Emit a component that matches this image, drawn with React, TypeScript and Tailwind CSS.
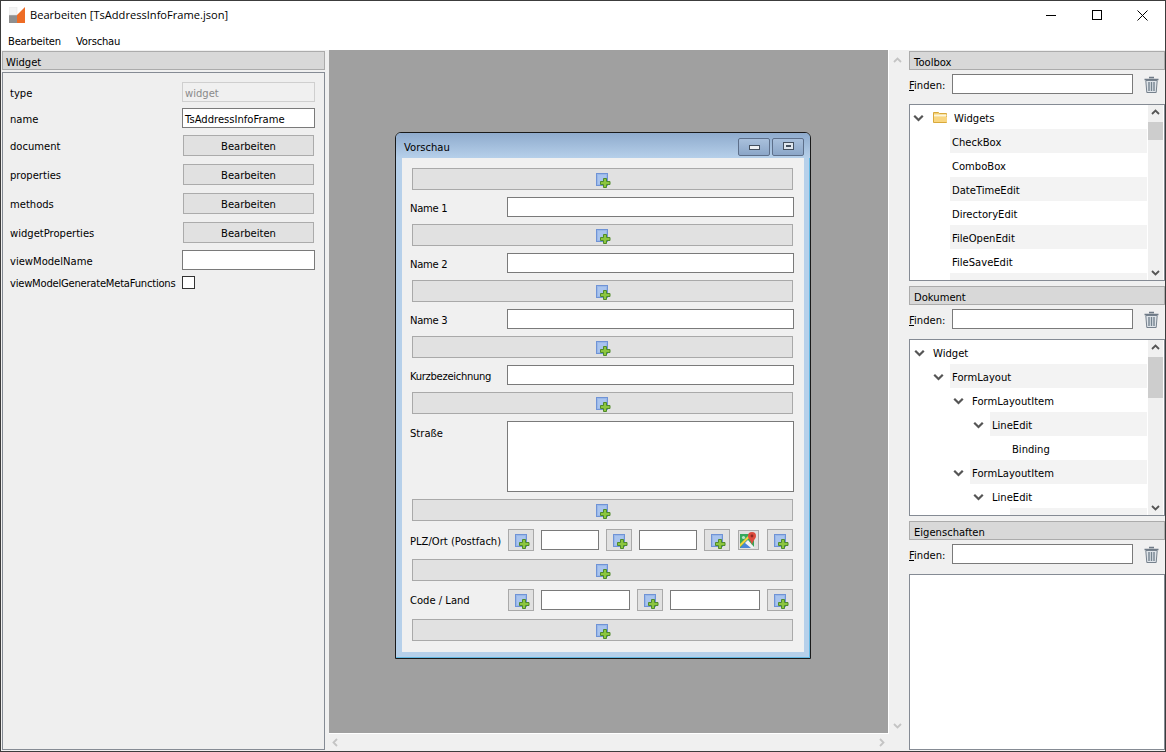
import React from "react";

const inputCls = "block h-[20px] border border-[#7a7a7a] bg-white";

function AddIcon({ className = "" }: { className?: string }) {
  return (
    <svg width="15" height="15" viewBox="0 0 15 15" className={className}>
      <rect x="0.5" y="0.5" width="11" height="12" fill="#9ab8e8" stroke="#6f93d6" />
      <rect x="2" y="2" width="8" height="9" fill="#a9c4ee" />
      <path d="M7.5 5.5h3v3h3.5v3h-3.5v3h-3v-3H4.5v-3h3z" fill="#8cc63f" stroke="#4f8a2a" />
    </svg>
  );
}

function AddBar() {
  return (
    <div className="ml-[10px] flex h-[22px] w-[381px] shrink-0 items-center justify-center border border-[#a9a9a9] bg-[#e1e1e1] pl-[2px] pt-[2px]">
      <AddIcon />
    </div>
  );
}

function AddButton() {
  return (
    <div className="flex h-[22px] w-[26px] shrink-0 items-center justify-center border border-[#a9a9a9] bg-[#e1e1e1] pl-[2px] pt-[2px]">
      <AddIcon />
    </div>
  );
}

function MapIcon() {
  return (
    <div className="flex h-[20px] w-[21px] shrink-0 items-center justify-center border border-[#a9a9a9] bg-[#e1e1e1]">
      <svg width="17" height="17" viewBox="0 0 17 17">
        <rect x="0" y="2" width="14" height="14" fill="#35a85a" />
        <path d="M0 16 L7 8 L14 16Z" fill="#4a86d8" />
        <path d="M0 12 L10 2 H13 L0 15Z" fill="#f4d23c" />
        <path d="M5 11 L8 8 L14 15 V16 H11Z" fill="#f3f3f3" />
        <circle cx="3.5" cy="5.5" r="1.6" fill="#bfe3c8" />
        <path d="M12 0a4 4 0 0 1 4 4c0 3-3 4-4 9-1-5-4-6-4-9a4 4 0 0 1 4-4z" fill="#dd4b3e" />
        <circle cx="12" cy="4" r="1.4" fill="#8e2a22" />
      </svg>
    </div>
  );
}

function FormRow({ label, children }: { label: string; children: React.ReactNode }) {
  return (
    <div className="mt-[7px] flex shrink-0 items-center">
      <div className="w-[105px] shrink-0 pl-[8px] pt-[4px] tracking-[-0.3px]">{label}</div>
      {children}
    </div>
  );
}

function Chevron({ dir = "down", color = "#555", size = 9 }: { dir?: "down" | "up" | "left" | "right"; color?: string; size?: number }) {
  const d = {
    down: "M1 3l3.5 3.5L8 3",
    up: "M1 6l3.5-3.5L8 6",
    left: "M6 1L2.5 4.5 6 8",
    right: "M3 1l3.5 3.5L3 8",
  }[dir];
  return (
    <svg width={size} height={size} viewBox="0 0 9 9" className="shrink-0">
      <path d={d} fill="none" stroke={color} strokeWidth="1.8" />
    </svg>
  );
}

function Trash() {
  return (
    <svg width="15" height="17" viewBox="0 0 15 17" className="shrink-0">
      <path d="M5 1.5h5M0.5 3.5h14" stroke="#6f7a86" strokeWidth="1.4" fill="none" />
      <path d="M1.8 4.5h11.4l-1 12H2.8z" fill="#dfe4e9" stroke="#76818d" />
      <path d="M5 6v9M7.5 6v9M10 6v9" stroke="#74838f" strokeWidth="1.4" />
    </svg>
  );
}

function Folder() {
  return (
    <svg width="15" height="12" viewBox="0 0 15 12" className="shrink-0">
      <path d="M0.5 1.5h5l1 1h7v9h-13z" fill="#f4cf72" stroke="#d9a93a" />
      <path d="M1 3.5h12.5v2H1z" fill="#fdf6dc" />
      <path d="M1 6h13v5H1z" fill="#f9d680" />
    </svg>
  );
}

function PanelHeader({ title, pl = "pl-[4px]" }: { title: string; pl?: string }) {
  return (
    <div className={`flex h-[19px] shrink-0 items-center border border-[#ababab] bg-[#d8d8d8] pt-[4px] ${pl}`}>{title}</div>
  );
}

function FindRow() {
  return (
    <div className="mb-[10px] mt-[4px] flex h-[20px] shrink-0 items-center">
      <div className="w-[43px] shrink-0 pt-[4px]">
        <span className="underline">F</span>inden:
      </div>
      <div className={`${inputCls} w-[181px] shrink-0`} />
      <div className="ml-[11px]">
        <Trash />
      </div>
    </div>
  );
}

type TreeItem = { text: string; indent: number; alt?: boolean; arrow?: boolean };

function TreeRow({ text, indent, alt, arrow }: TreeItem) {
  return (
    <div className="flex h-[24px] w-[237px] shrink-0 items-center">
      <div className="flex shrink-0 items-center justify-end pr-[2px]" style={{ width: indent }}>
        {arrow && (
          <span className="mr-[4px]">
            <Chevron dir="down" size={11} />
          </span>
        )}
      </div>
      <div className={`flex h-[24px] flex-1 items-center pl-[2px] pt-[4px] ${alt ? "bg-[#f3f3f3]" : ""}`}>{text}</div>
    </div>
  );
}

function ScrollBar({ thumbTop, thumbH }: { thumbTop: number; thumbH: number }) {
  return (
    <div className="relative mr-[1px] flex w-[15px] shrink-0 flex-col items-center justify-between bg-[#f0f0f0] py-[3px]">
      <Chevron dir="up" />
      <div className="absolute left-0 w-[15px] bg-[#cdcdcd]" style={{ top: thumbTop, height: thumbH }} />
      <Chevron dir="down" />
    </div>
  );
}

function ToolboxTree() {
  const items = ["CheckBox", "ComboBox", "DateTimeEdit", "DirectoryEdit", "FileOpenEdit", "FileSaveEdit"];
  return (
    <div className="flex h-[177px] shrink-0 border border-[#858b94] bg-white">
      <div className="w-[238px] shrink-0 overflow-hidden">
        <div className="flex h-[24px] items-center">
          <span className="ml-[3px]">
            <Chevron size={11} />
          </span>
          <span className="ml-[9px]">
            <Folder />
          </span>
          <span className="ml-[6px] pt-[4px]">Widgets</span>
        </div>
        {items.map((t, i) => (
          <TreeRow key={t} text={t} indent={40} alt={i % 2 === 0} />
        ))}
        <TreeRow text="" indent={40} alt />
      </div>
      <ScrollBar thumbTop={17} thumbH={18} />
    </div>
  );
}

function DokumentTree() {
  const rows: TreeItem[] = [
    { text: "Widget", indent: 21, arrow: true },
    { text: "FormLayout", indent: 40, alt: true, arrow: true },
    { text: "FormLayoutItem", indent: 60, arrow: true },
    { text: "LineEdit", indent: 80, alt: true, arrow: true },
    { text: "Binding", indent: 100 },
    { text: "FormLayoutItem", indent: 60, alt: true, arrow: true },
    { text: "LineEdit", indent: 80, arrow: true },
    { text: "", indent: 100, alt: true },
  ];
  return (
    <div className="flex h-[177px] shrink-0 border border-[#858b94] bg-white">
      <div className="w-[238px] shrink-0 overflow-hidden">
        {rows.map((r, i) => (
          <TreeRow key={i} {...r} />
        ))}
      </div>
      <ScrollBar thumbTop={17} thumbH={41} />
    </div>
  );
}

function LeftRow({ label, children, h, mt, pt = "pt-[2px]", tracking = "" }: { label: string; children: React.ReactNode; h: string; mt: string; pt?: string; tracking?: string }) {
  return (
    <div className={`flex items-center ${h} ${mt}`}>
      <div className={`w-[179px] shrink-0 whitespace-nowrap pl-[7px] ${pt} ${tracking}`}>{label}</div>
      {children}
    </div>
  );
}

function EditButton() {
  return (
    <div className="ml-[1px] flex h-[21px] w-[131px] items-center justify-center border border-[#ababab] bg-[#e1e1e1] pt-[2px]">
      Bearbeiten
    </div>
  );
}

function PreviewWindow() {
  return (
    <div className="flex h-[527px] w-[416px] flex-col rounded-t-[6px] border border-[#1a1a1a] bg-[#b6d0ea] shadow-[inset_-1px_-1px_0_#62b8e2]">
      <div className="flex h-[25px] shrink-0 items-center justify-between rounded-t-[5px] bg-gradient-to-b from-[#8fabcd] to-[#b6d0ea] pl-[8px] pr-[6px]">
        <span className="pt-[4px] text-black">Vorschau</span>
        <div className="flex gap-[2px] pt-[2px]">
          <div className="flex h-[18px] w-[32px] items-center justify-center rounded-[2px] border border-[#5d6f8a] bg-gradient-to-b from-[#a9c0dc] to-[#8ba6c8]">
            <div className="mt-[2px] h-[5px] w-[11px] border border-[#44505f] bg-[#eef1f4]" />
          </div>
          <div className="flex h-[18px] w-[32px] items-center justify-center rounded-[2px] border border-[#5d6f8a] bg-gradient-to-b from-[#a9c0dc] to-[#8ba6c8]">
            <div className="mb-[1px] flex h-[8px] w-[11px] items-center justify-center border border-[#44505f] bg-[#dfe6ee]">
              <div className="h-[2px] w-[5px] bg-[#44505f]" />
            </div>
          </div>
        </div>
      </div>
      <div className="mx-[6px] flex h-[494px] flex-col bg-[#f0f0f0] pt-[10px]">
        <AddBar />
        <FormRow label="Name 1">
          <div className={`${inputCls} w-[287px]`} />
        </FormRow>
        <div className="h-[7px] shrink-0" />
        <AddBar />
        <FormRow label="Name 2">
          <div className={`${inputCls} w-[287px]`} />
        </FormRow>
        <div className="h-[7px] shrink-0" />
        <AddBar />
        <FormRow label="Name 3">
          <div className={`${inputCls} w-[287px]`} />
        </FormRow>
        <div className="h-[7px] shrink-0" />
        <AddBar />
        <FormRow label="Kurzbezeichnung">
          <div className={`${inputCls} w-[287px]`} />
        </FormRow>
        <div className="h-[7px] shrink-0" />
        <AddBar />
        <div className="mt-[7px] flex shrink-0 items-start">
          <div className="w-[105px] shrink-0 pl-[8px] pt-[8px]">Straße</div>
          <div className="h-[71px] w-[287px] border border-[#7a7a7a] bg-white" />
        </div>
        <div className="h-[7px] shrink-0" />
        <AddBar />
        <div className="mt-[8px] flex h-[22px] shrink-0 items-center">
          <div className="w-[106px] shrink-0 whitespace-nowrap pl-[8px] pt-[4px]">PLZ/Ort (Postfach)</div>
          <AddButton />
          <div className={`${inputCls} ml-[7px] w-[58px]`} />
          <div className="ml-[7px]">
            <AddButton />
          </div>
          <div className={`${inputCls} ml-[7px] w-[58px]`} />
          <div className="ml-[7px]">
            <AddButton />
          </div>
          <div className="ml-[8px]">
            <MapIcon />
          </div>
          <div className="ml-[8px]">
            <AddButton />
          </div>
        </div>
        <div className="h-[8px] shrink-0" />
        <AddBar />
        <div className="mt-[8px] flex h-[22px] shrink-0 items-center">
          <div className="w-[106px] shrink-0 pl-[8px] pt-[2px]">Code / Land</div>
          <AddButton />
          <div className={`${inputCls} ml-[7px] w-[89px]`} />
          <div className="ml-[7px]">
            <AddButton />
          </div>
          <div className={`${inputCls} ml-[7px] w-[90px]`} />
          <div className="ml-[7px]">
            <AddButton />
          </div>
        </div>
        <div className="h-[8px] shrink-0" />
        <AddBar />
      </div>
    </div>
  );
}

export default function App() {
  return (
    <div className="flex h-[752px] w-[1166px] flex-col overflow-hidden border border-[#3c3c3c] bg-white font-['DejaVu_Sans',sans-serif] text-[10px] leading-none text-black">
      {/* title bar */}
      <div className="flex h-[30px] shrink-0 items-center pb-[2px]">
        <svg width="18" height="17" viewBox="0 0 18 17" className="ml-[8px] shrink-0">
          <path d="M0 8h8v8H0z" fill="#8f8f8f" />
          <path d="M0 0h8v8H0z" fill="#f4f4f4" stroke="#e2e2e2" strokeWidth="0.5" />
          <path d="M8 16V8l8-8v16z" fill="#ee6c25" />
        </svg>
        <span className="ml-[3px] font-['Open_Sans',sans-serif] text-[11.1px]">Bearbeiten [TsAddressInfoFrame.json]</span>
        <div className="ml-auto flex text-[#111]">
          <div className="flex w-[46px] items-center justify-center pr-[1px]">
            <div className="h-px w-[10px] bg-black" />
          </div>
          <div className="flex w-[45px] items-center justify-center">
            <div className="h-[10px] w-[10px] border border-black" />
          </div>
          <div className="flex w-[46px] items-center justify-center">
            <svg width="11" height="11" viewBox="0 0 11 11">
              <path d="M0.5 0.5l10 10M10.5 0.5l-10 10" stroke="#000" fill="none" />
            </svg>
          </div>
        </div>
      </div>
      {/* menu */}
      <div className="flex h-[19px] shrink-0 items-center gap-[15px] pl-[7px] pt-[2px]">
        <span className="tracking-[-0.2px]">Bearbeiten</span>
        <span className="tracking-[-0.2px]">Vorschau</span>
      </div>
      <div className="flex min-h-0 flex-1 bg-[#f0f0f0]">
        {/* left panel */}
        <div className="flex w-[328px] shrink-0 flex-col pb-[1px] pl-[1px] pr-[4px] pt-[1px]">
          <PanelHeader title="Widget" pl="pl-[3px]" />
          <div className="mt-[2px] flex-1 border border-[#858b94] bg-[#efefef] pt-[9px]">
            <LeftRow label="type" h="h-[20px]" mt="" pt="pt-[4px]">
              <div className="flex h-[20px] w-[133px] items-center border border-[#cfcfcf] bg-[#f0f0f0] pl-[2px] pt-[4px] text-[#8a8a8a]">widget</div>
            </LeftRow>
            <LeftRow label="name" h="h-[20px]" mt="mt-[6px]" pt="pt-[4px]">
              <div className={`${inputCls} flex w-[133px] items-center pl-[2px] pt-[3px]`}>TsAddressInfoFrame</div>
            </LeftRow>
            <LeftRow label="document" h="h-[21px]" mt="mt-[7px]">
              <EditButton />
            </LeftRow>
            <LeftRow label="properties" h="h-[21px]" mt="mt-[8px]">
              <EditButton />
            </LeftRow>
            <LeftRow label="methods" h="h-[21px]" mt="mt-[8px]">
              <EditButton />
            </LeftRow>
            <LeftRow label="widgetProperties" h="h-[21px]" mt="mt-[8px]">
              <EditButton />
            </LeftRow>
            <LeftRow label="viewModelName" h="h-[20px]" mt="mt-[7px]" pt="pt-[4px]">
              <div className={`${inputCls} w-[133px]`} />
            </LeftRow>
            <LeftRow label="viewModelGenerateMetaFunctions" h="h-[13px]" mt="mt-[6px]" tracking="tracking-[-0.23px]">
              <div className="h-[13px] w-[13px] border border-[#333] bg-white" />
            </LeftRow>
          </div>
        </div>
        {/* centre canvas */}
        <div className="flex w-[580px] shrink-0 flex-col">
          <div className="flex h-[684px] shrink-0">
            <div className="w-[560px] shrink-0 border-b border-r border-white bg-[#a0a0a0] pl-[66px] pt-[82px]">
              <PreviewWindow />
            </div>
            <div className="flex flex-1 flex-col items-center justify-between pb-[4px] pr-[3px] pt-[6px]">
              <Chevron dir="up" color="#c4c4c4" />
              <Chevron dir="down" color="#c4c4c4" />
            </div>
          </div>
          <div className="flex flex-1 items-center justify-between pl-[2px] pr-[23px]">
            <Chevron dir="left" color="#c4c4c4" />
            <Chevron dir="right" color="#c4c4c4" />
          </div>
        </div>
        {/* right panel */}
        <div className="flex min-w-0 flex-1 flex-col pt-[1px]">
          <PanelHeader title="Toolbox" />
          <FindRow />
          <ToolboxTree />
          <div className="h-[5px] shrink-0" />
          <PanelHeader title="Dokument" />
          <FindRow />
          <DokumentTree />
          <div className="h-[5px] shrink-0" />
          <PanelHeader title="Eigenschaften" />
          <FindRow />
          <div className="mb-[1px] flex-1 border border-[#858b94] bg-white" />
        </div>
      </div>
    </div>
  );
}
